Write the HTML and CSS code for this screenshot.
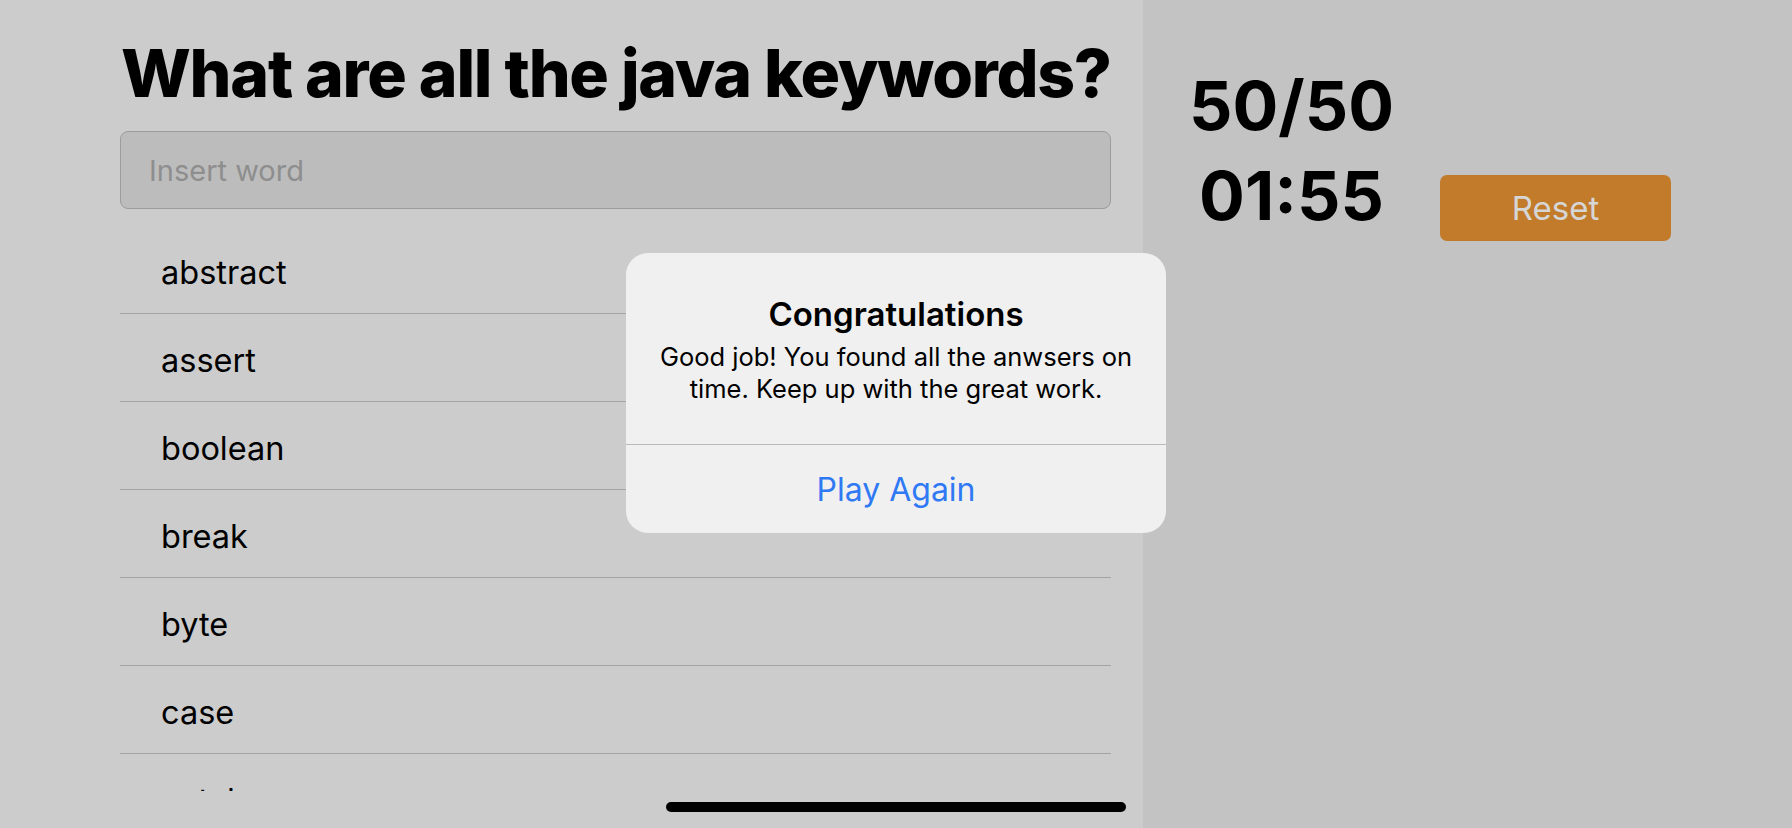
FILE: index.html
```html
<!DOCTYPE html>
<html lang="en">
<head>
<meta charset="utf-8">
<title>Java keywords quiz</title>
<link rel="stylesheet" href="styles.css">
</head>
<body>
<div class="screen">
  <main class="quiz">
    <h1 class="title">What are all the java keywords?</h1>
    <div class="input">Insert word</div>
    <ul class="list">
      <li class="row">abstract</li>
      <li class="row">assert</li>
      <li class="row">boolean</li>
      <li class="row">break</li>
      <li class="row">byte</li>
      <li class="row">case</li>
      <li class="row">catch</li>
    </ul>
  </main>
  <aside class="side">
    <div class="stats">
      <div class="score">50/50</div>
      <div class="timer">01:55</div>
    </div>
    <div class="reset">Reset</div>
  </aside>

  <div class="alert">
    <div class="alert-body">
      <div class="alert-title">Congratulations</div>
      <div class="alert-msg">Good job! You found all the anwsers on time. Keep up with the great work.</div>
    </div>
    <div class="alert-action">Play Again</div>
  </div>

  <div class="home-bar"></div>
</div>
</body>
</html>
```

FILE: styles.css
```css
* { box-sizing: border-box; }
html, body {
  margin: 0;
  padding: 0;
  width: 1792px;
  height: 828px;
  overflow: hidden;
  font-family: Inter, "Noto Sans", "Liberation Sans", sans-serif;
  color: #000;
}
.screen {
  position: relative;
  display: flex;
  width: 1792px;
  height: 828px;
}
.quiz {
  width: 1143px;
  height: 791px;
  background: #cccccc;
  padding: 33px 32px 0 120px;
  overflow: hidden;
  display: flex;
  flex-direction: column;
}
.screen::before {
  content: "";
  position: absolute;
  left: 0;
  top: 791px;
  width: 1143px;
  height: 37px;
  background: #cccccc;
}
.title {
  margin: 0 0 0 1px;
  font-size: 66px;
  line-height: 80px;
  font-weight: 800;
  letter-spacing: -1.25px;
  white-space: nowrap;
}
.input {
  margin-top: 18px;
  height: 78px;
  flex: none;
  background: #bcbcbc;
  border: 1.5px solid #9c9c9c;
  border-radius: 8px;
  padding-left: 28px;
  display: flex;
  align-items: center;
  font-size: 29px;
  color: #8e8e8e;
}
.list {
  list-style: none;
  margin: 17px 0 0 0;
  padding: 0;
}
.row {
  height: 88px;
  flex: none;
  border-bottom: 1px solid #a3a3a3;
  padding: 5px 0 0 41px;
  display: flex;
  align-items: center;
  font-size: 32.5px;
  color: #000;
}
.side {
  flex: 1;
  background: #c3c3c3;
  display: flex;
  align-items: flex-start;
}
.stats {
  width: 297px;
  padding-top: 60px;
  text-align: center;
  font-weight: 700;
  font-size: 68px;
  line-height: 90px;
}
.reset {
  margin-top: 175px;
  width: 231px;
  height: 66px;
  border-radius: 7px;
  background: #c27b2b;
  color: #d6d6d6;
  font-size: 33px;
  display: flex;
  align-items: center;
  justify-content: center;
}
.alert {
  position: absolute;
  left: 626px;
  top: 253px;
  width: 540px;
  height: 280px;
  background: #f0f0f0;
  border-radius: 22px;
  display: flex;
  flex-direction: column;
  overflow: hidden;
}
.alert-body {
  height: 192px;
  border-bottom: 1px solid #b9b9b9;
  padding: 41px 28px 0;
  text-align: center;
}
.alert-title {
  font-size: 33px;
  font-weight: 600;
  line-height: 40px;
}
.alert-msg {
  margin-top: 7px;
  font-size: 25.5px;
  line-height: 32px;
}
.alert-action {
  flex: 1;
  display: flex;
  align-items: center;
  justify-content: center;
  font-size: 32px;
  color: #3079f4;
}
.home-bar {
  position: absolute;
  left: 666px;
  top: 802px;
  width: 460px;
  height: 10px;
  border-radius: 5px;
  background: #000;
}
```
